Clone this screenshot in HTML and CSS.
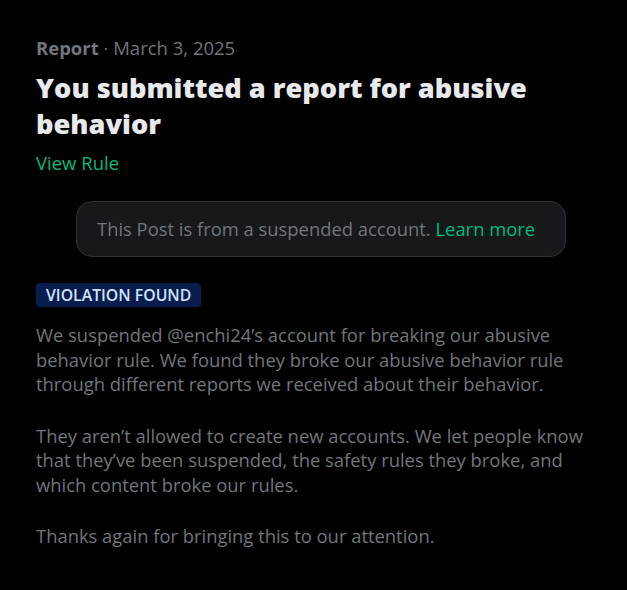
FILE: index.html
```html
<!DOCTYPE html>
<html lang="en">
<head>
<meta charset="UTF-8">
<meta name="viewport" content="width=device-width, initial-scale=1.0">
<title>Report</title>
<link rel="stylesheet" href="styles.css">
</head>
<body>
<div class="report">
    <!-- Header -->
    <div class="report-meta"><span class="report-label">Report</span> · March 3, 2025</div>
    <h1 class="report-title">You submitted a report for abusive behavior</h1>
    <a class="view-rule" href="#">View Rule</a>

    <!-- Suspended post notice -->
    <div class="notice">
        This Post is from a suspended account. <a href="#">Learn more</a>
    </div>

    <span class="badge">VIOLATION FOUND</span>

    <div class="report-body">
        <p>We suspended @enchi24’s account for breaking our abusive behavior rule. We found they broke our abusive behavior rule through different reports we received about their behavior.</p>
        <p>They aren’t allowed to create new accounts. We let people know that they’ve been suspended, the safety rules they broke, and which content broke our rules.</p>
        <p>Thanks again for bringing this to our attention.</p>
    </div>
</div>
</body>
</html>
```

FILE: styles.css
```css
body {
    margin: 0;
    padding: 0;
    background-color: #000000;
    font-family: 'Open Sans', sans-serif;
    color: #71767b;
}

.report {
    padding: 36px 36px 0 36px;
    width: 555px;
}

.report-meta {
    font-size: 18.5px;
    line-height: 24px;
    color: #71767b;
}

.report-label {
    font-weight: 700;
}

.report-title {
    margin: 10px 0 9px 0;
    font-size: 27.2px;
    line-height: 36px;
    font-weight: 800;
    color: #e7e9ea;
}

.view-rule {
    display: block;
    width: max-content;
    font-size: 18.5px;
    line-height: 24px;
    color: #00ba7c;
    text-decoration: none;
}

.notice {
    margin: 26px 25px 26px 40px;
    padding: 15px 20px;
    background-color: #16181c;
    border: 1px solid #2f3336;
    border-radius: 16px;
    font-size: 18.4px;
    line-height: 24px;
    color: #71767b;
}

.notice a {
    color: #00ba7c;
    text-decoration: none;
}

.badge {
    display: inline-block;
    padding: 0 10px;
    background-color: #081d4c;
    border-radius: 4px;
    font-size: 15.8px;
    line-height: 24px;
    font-weight: 600;
    color: #d2e3ff;
}

.report-body {
    margin-top: 16px;
}

.report-body p {
    margin: 0 0 27px 0;
    font-size: 18.4px;
    line-height: 24.5px;
    color: #71767b;
}
```
